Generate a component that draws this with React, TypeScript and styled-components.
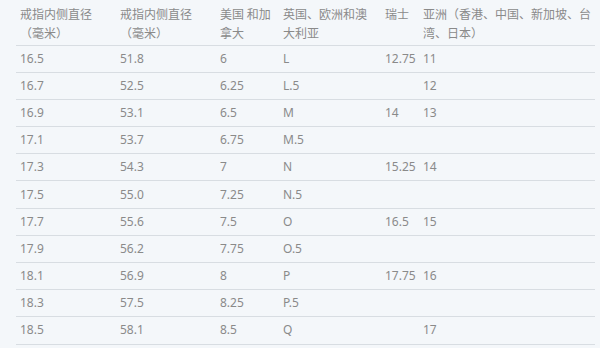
import styled, { createGlobalStyle } from 'styled-components';

const GlobalStyle = createGlobalStyle`
  html, body {
    margin: 0;
    padding: 0;
    background: #f4f7fa;
  }
  body {
    width: 600px;
    height: 348px;
    overflow: hidden;
  }
`;

const Page = styled.div`
  padding: 0 5px 0 16px;
  background: #f4f7fa;
  height: 348px;
  box-sizing: border-box;
`;

const SizeTable = styled.table`
  width: 579px;
  border-collapse: collapse;
  table-layout: fixed;
  font-family: 'Noto Sans', 'Noto Sans CJK SC', sans-serif;
  font-size: 12px;
  color: #8a8a8a;
`;

const HeadCell = styled.th`
  height: 45px;
  padding: 4px 4px 0;
  box-sizing: border-box;
  text-align: left;
  font-weight: normal;
  line-height: 19px;
  vertical-align: top;
  border-bottom: 1px solid #d8dde2;
  font-family: 'Noto Sans CJK SC', sans-serif;
`;

const Row = styled.tr`
  height: 27.2px;
`;

const Cell = styled.td`
  padding: 0 4px;
  line-height: 26px;
  border-bottom: 1px solid #d8dde2;
  white-space: nowrap;
`;

const columns = [
  { width: 100, head: ['戒指内侧直径', '（毫米）'] },
  { width: 100, head: ['戒指内侧直径', '（毫米）'] },
  { width: 63, head: ['美国 和加', '拿大'] },
  { width: 102, head: ['英国、欧洲和澳', '大利亚'] },
  { width: 38, head: ['瑞士'] },
  { width: 176, head: ['亚洲（香港、中国、新加坡、台', '湾、日本）'] },
];

const rows = [
  ['16.5', '51.8', '6', 'L', '12.75', '11'],
  ['16.7', '52.5', '6.25', 'L.5', '', '12'],
  ['16.9', '53.1', '6.5', 'M', '14', '13'],
  ['17.1', '53.7', '6.75', 'M.5', '', ''],
  ['17.3', '54.3', '7', 'N', '15.25', '14'],
  ['17.5', '55.0', '7.25', 'N.5', '', ''],
  ['17.7', '55.6', '7.5', 'O', '16.5', '15'],
  ['17.9', '56.2', '7.75', 'O.5', '', ''],
  ['18.1', '56.9', '8', 'P', '17.75', '16'],
  ['18.3', '57.5', '8.25', 'P.5', '', ''],
  ['18.5', '58.1', '8.5', 'Q', '', '17'],
];

export default function App() {
  return (
    <>
      <GlobalStyle />
      <Page>
        <SizeTable>
          <colgroup>
            {columns.map((c, i) => (
              <col key={i} style={{ width: c.width }} />
            ))}
          </colgroup>
          <thead>
            <tr>
              {columns.map((c, i) => (
                <HeadCell key={i}>
                  {c.head.map((line, j) => (
                    <div key={j}>{line}</div>
                  ))}
                </HeadCell>
              ))}
            </tr>
          </thead>
          <tbody>
            {rows.map((r, i) => (
              <Row key={i}>
                {r.map((v, j) => (
                  <Cell key={j}>{v}</Cell>
                ))}
              </Row>
            ))}
          </tbody>
        </SizeTable>
      </Page>
    </>
  );
}
